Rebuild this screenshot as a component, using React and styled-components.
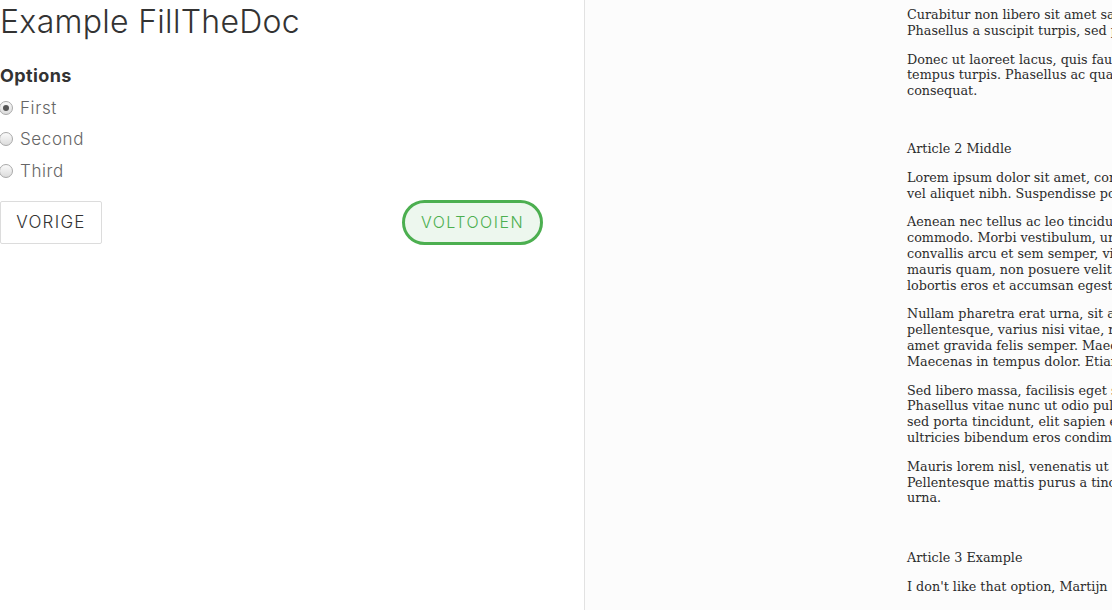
import React, { useState } from 'react';
import styled, { createGlobalStyle } from 'styled-components';

const GlobalStyle = createGlobalStyle`
  html, body {
    margin: 0;
    padding: 0;
    background: #ffffff;
    overflow: hidden;
  }
`;

const options = ['First', 'Second', 'Third'];

const articles = [
  {
    paragraphs: [
      ['Curabitur non libero sit amet sapien pretium vestibulum.', 'Phasellus a suscipit turpis, sed pharetra lectus.'],
      [
        'Donec ut laoreet lacus, quis faucibus magna. Nunc a',
        'tempus turpis. Phasellus ac quam vel nisi tincidunt',
        'consequat.'
      ]
    ]
  },
  {
    title: 'Article 2 Middle',
    paragraphs: [
      ['Lorem ipsum dolor sit amet, consectetur adipiscing elit. Donec', 'vel aliquet nibh. Suspendisse potenti.'],
      [
        'Aenean nec tellus ac leo tincidunt aliquam. Nam a mi',
        'commodo. Morbi vestibulum, urna et dictum posuere,',
        'convallis arcu et sem semper, vitae pretium nunc. Integer',
        'mauris quam, non posuere velit sodales at. Nullam',
        'lobortis eros et accumsan egestas.'
      ],
      [
        'Nullam pharetra erat urna, sit amet dictum lorem',
        'pellentesque, varius nisi vitae, rhoncus nunc. Sit',
        'amet gravida felis semper. Maecenas a sem nec neque.',
        'Maecenas in tempus dolor. Etiam vel mauris.'
      ],
      [
        'Sed libero massa, facilisis eget sem nec, laoreet.',
        'Phasellus vitae nunc ut odio pulvinar bibendum,',
        'sed porta tincidunt, elit sapien efficitur lectus, at',
        'ultricies bibendum eros condimentum ante.'
      ],
      [
        'Mauris lorem nisl, venenatis ut luctus at, gravida',
        'Pellentesque mattis purus a tincidunt vehicula, in',
        'urna.'
      ]
    ]
  },
  {
    title: 'Article 3 Example',
    paragraphs: [["I don't like that option, Martijn"]]
  }
];

export default function App() {
  const [choice, setChoice] = useState('First');

  return (
    <Page>
      <GlobalStyle />
      <FormPane>
        <Title>Example FillTheDoc</Title>
        <Fieldset>
          <Legend>Options</Legend>
          {options.map(o => (
            <Option key={o}>
              <Radio
                type="radio"
                name="options"
                checked={choice === o}
                onChange={() => setChoice(o)}
              />
              {o}
            </Option>
          ))}
        </Fieldset>
        <Actions>
          <PrevButton>VORIGE</PrevButton>
          <DoneButton>VOLTOOIEN</DoneButton>
        </Actions>
      </FormPane>
      <DocPane>
        <Doc>
          {articles.map((a, i) => (
            <Article key={i}>
              {a.title && <ArticleTitle>{a.title}</ArticleTitle>}
              {a.paragraphs.map((p, j) => (
                <Para key={j}>
                  {p.map((line, k) => (
                    <Line key={k}>{line}</Line>
                  ))}
                </Para>
              ))}
            </Article>
          ))}
        </Doc>
      </DocPane>
    </Page>
  );
}

const Page = styled.div`
  display: flex;
  width: 1112px;
  height: 610px;
  overflow: hidden;
`;

const FormPane = styled.div`
  flex: 0 0 543px;
  padding-right: 41px;
  border-right: 1px solid #e2e2e2;
  font-family: Inter, 'Open Sans', sans-serif;
  color: #333;
`;

const Title = styled.h1`
  margin: 4px 0 0 0;
  font-size: 32px;
  font-weight: 300;
  line-height: 36px;
  color: #333;
  letter-spacing: 0.3px;
`;

const Fieldset = styled.div`
  display: flex;
  flex-direction: column;
  margin-top: 25px;
`;

const Legend = styled.div`
  font-size: 18px;
  font-weight: 700;
  line-height: 22px;
  color: #333;
  margin-bottom: 5px;
  letter-spacing: 0.4px;
`;

const Option = styled.label`
  display: flex;
  align-items: center;
  gap: 7px;
  height: 31.5px;
  font-size: 17px;
  font-weight: 300;
  color: #666;
  letter-spacing: 0.6px;
`;

const Radio = styled.input`
  appearance: none;
  margin: 0 0 0 -1px;
  width: 14px;
  height: 14px;
  border-radius: 50%;
  border: 1px solid #a9a9a9;
  background: linear-gradient(#fafafa, #dcdcdc);
  box-sizing: border-box;
  display: grid;
  place-items: center;

  &:checked::after {
    content: '';
    width: 6px;
    height: 6px;
    border-radius: 50%;
    background: #555;
  }
`;

const Actions = styled.div`
  display: flex;
  justify-content: space-between;
  align-items: center;
  margin-top: 13px;
`;

const PrevButton = styled.button`
  height: 43px;
  width: 102px;
  border: 1px solid #dcdcdc;
  border-radius: 2px;
  background: #fff;
  font-family: Inter, 'Open Sans', sans-serif;
  font-size: 17px;
  font-weight: 300;
  color: #333;
  letter-spacing: 1.3px;
`;

const DoneButton = styled.button`
  height: 45px;
  width: 141px;
  border: 3px solid #4caf50;
  border-radius: 23px;
  background: #edf7ee;
  font-family: Inter, 'Open Sans', sans-serif;
  font-size: 16px;
  font-weight: 300;
  color: #4caf50;
  letter-spacing: 1.5px;
`;

const DocPane = styled.div`
  flex: 1;
  background: #fcfcfc;
  padding-left: 322px;
  overflow: hidden;
`;

const Doc = styled.div`
  width: 480px;
  padding-top: 1px;
  font-family: 'DejaVu Serif', serif;
  font-size: 12.75px;
  line-height: 15.8px;
  color: #2b2b2b;
`;

const Article = styled.section`
  & + & {
    margin-top: 42px;
  }
  & + &:last-child {
    margin-top: 44px;
  }
`;

const ArticleTitle = styled.div`
  margin: 13px 0;
`;

const Para = styled.p`
  margin: 6px 0 13px 0;
`;

const Line = styled.span`
  display: block;
  white-space: nowrap;
`;
